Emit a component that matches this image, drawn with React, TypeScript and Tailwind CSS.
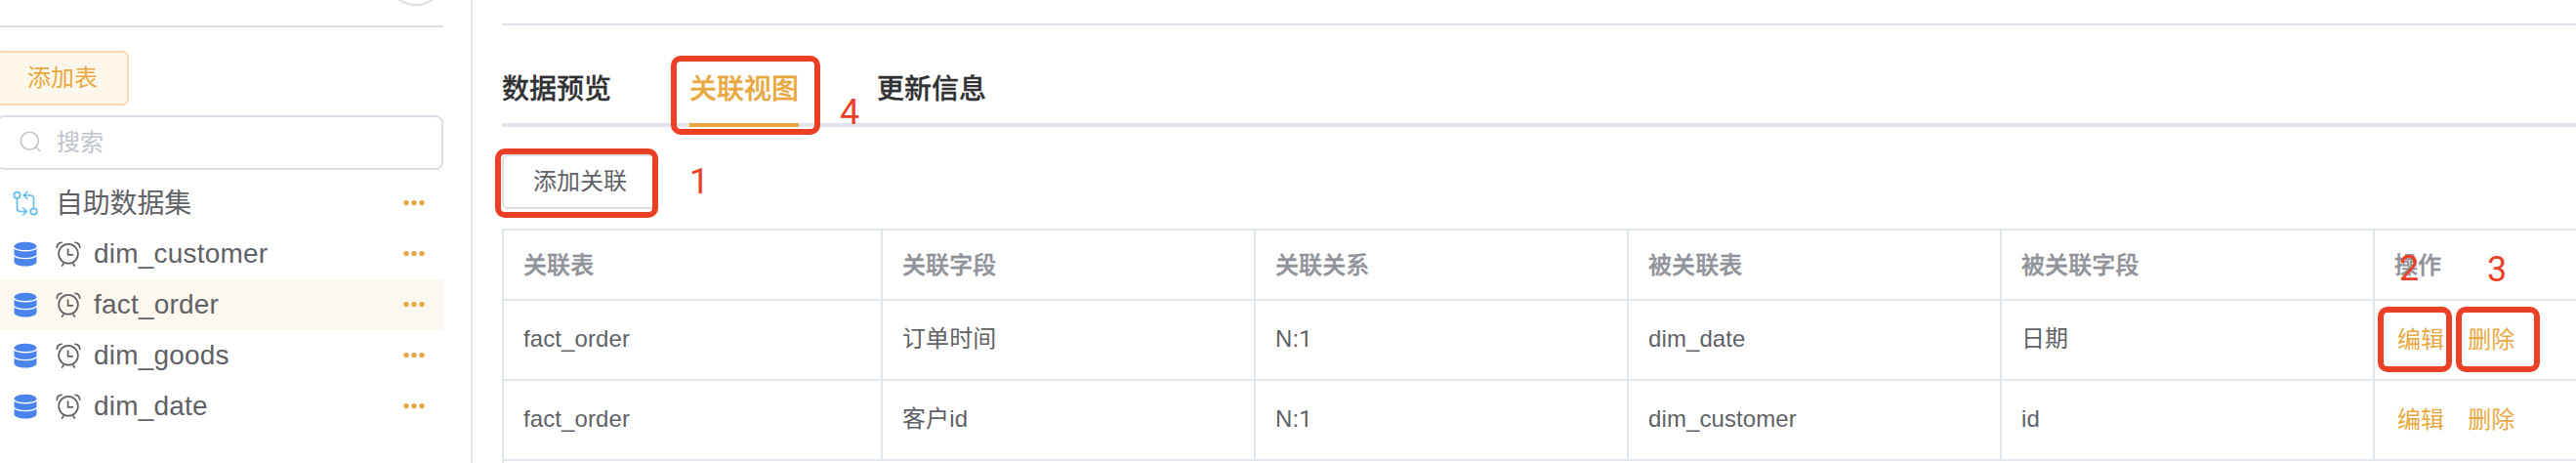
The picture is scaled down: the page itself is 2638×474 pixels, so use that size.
import React from "react";

const tables = ["dim_customer", "fact_order", "dim_goods", "dim_date"];

const relations = [
  { table: "fact_order", field: "订单时间", kind: "N:1", target: "dim_date", targetField: "日期" },
  { table: "fact_order", field: "客户id", kind: "N:1", target: "dim_customer", targetField: "id" },
];

const headers = ["关联表", "关联字段", "关联关系", "被关联表", "被关联字段"];

function Dots() {
  return (
    <svg className="h-6 w-6 shrink-0" viewBox="0 0 24 24" fill="#e8a83f">
      <circle cx="4" cy="11.6" r="2.7" />
      <circle cx="12" cy="11.6" r="2.7" />
      <circle cx="20" cy="11.6" r="2.7" />
    </svg>
  );
}

function DatabaseIcon() {
  return (
    <svg className="h-[26px] w-6 shrink-0" viewBox="0 0 24 26">
      <path d="M0.500 5v16c0 2.600 5 4.500 11.500 4.500s11.500-1.900 11.500-4.500V5z" fill="#4a83ec" />
      <ellipse cx="12" cy="5" rx="11.500" ry="4.300" fill="#4a83ec" />
      <path d="M0 6.200c1.500 2.400 6 3.600 12 3.600s10.500-1.200 12-3.600M0 14.200c1.500 2.400 6 3.400 12 3.400s10.500-1 12-3.400" fill="none" stroke="#fff" strokeWidth="1.400" />
    </svg>
  );
}

function ClockIcon() {
  return (
    <svg className="h-[26px] w-[26px] shrink-0" viewBox="0 0 26 26" fill="none" stroke="#606266" strokeWidth="1.700" strokeLinecap="round">
      <circle cx="13" cy="12.800" r="9.900" />
      <path d="M12.600 8v5.800h4.800M8 23l-1.400 2M18 23l1.400 2M1.300 6.200C1.300 3 3.300 1.500 6 1.300M24.700 6.200C24.700 3 22.700 1.500 20 1.300" />
    </svg>
  );
}

function DatasetIcon() {
  return (
    <svg className="h-[26px] w-[26px] shrink-0" viewBox="0 0 26 26" fill="none" stroke="#62bdf0" strokeWidth="1.700" strokeLinecap="round" strokeLinejoin="round">
      <circle cx="4.500" cy="4.800" r="3.200" />
      <circle cx="21.500" cy="21.500" r="3.200" />
      <path d="M4.500 8v10.500a3 3 0 0 0 3 3H14M10.800 18l3.400 3.500-3.400 3.500M21.500 18.300V8a3 3 0 0 0-3-3H11.500M14.800 1.500L11.300 5l3.500 3.500" />
    </svg>
  );
}

function Mark({ className, children }: { className: string; children?: React.ReactNode }) {
  return <div className={"absolute text-[#ec4026] " + className}>{children}</div>;
}

function Sidebar() {
  return (
    <aside className="relative h-full w-[484px] shrink-0 border-r-2 border-[#e6e6e6]">
      <div className="absolute left-[396px] top-[-54px] h-[60px] w-[60px] rounded-full border-2 border-[#dcdde6]" />
      <div className="flex w-[454px] flex-col">
        <div className="h-7 border-b-2 border-[#dddde5]" />
        <button className="-ml-1 mt-6 h-14 w-[136px] rounded-md border-2 border-[#f5dcab] bg-[#fdf6ea] text-2xl text-[#e8a83f]">
          添加表
        </button>
        <div className="-ml-1 mt-2.5 flex h-14 items-center rounded-lg border-2 border-[#dddde5] pl-[22px] text-2xl text-[#c0c4cc]">
          <svg className="mb-0.5 mr-4 h-[22px] w-[22px]" viewBox="0 0 22 22" fill="none" stroke="#c0c4cc" strokeWidth="1.600">
            <circle cx="10.300" cy="10.300" r="9" />
            <path d="M16.800 16.800l3.700 3.700" strokeLinecap="round" />
          </svg>
          <span>搜索</span>
        </div>
        <div className="mt-2 flex h-[52px] items-center pl-[13px] pr-[18px] text-[28px]">
          <DatasetIcon />
          <span className="ml-[18px] flex-1 pt-0.5 tracking-[-0.2px]">自助数据集</span>
          <Dots />
        </div>
        {tables.map((name) => (
          <div
            key={name}
            className={
              "flex h-[52px] items-center pl-3.5 pr-[18px] text-[28px] tracking-[0.2px] " + (name === "fact_order" ? "bg-[#fdf8ef]" : "")
            }
          >
            <DatabaseIcon />
            <span className="ml-[19px] flex">
              <ClockIcon />
            </span>
            <span className="ml-[13px] flex-1">{name}</span>
            <Dots />
          </div>
        ))}
      </div>
    </aside>
  );
}

export default function App() {
  return (
    <div className="relative flex h-[474px] w-[2638px] overflow-hidden bg-white font-['Liberation_Sans','Noto_Sans_CJK_SC',sans-serif] text-[#606266]">
      <Sidebar />
      <main className="flex min-w-0 flex-1 flex-col pl-[30px]">
        <div className="h-[26px] shrink-0 border-b-2 border-[#dfe3ea]" />
        <nav className="flex h-[104px] shrink-0 gap-20 border-b-4 border-[#dfe4ed] pt-7 text-[28px] font-medium text-[#303133] [-webkit-text-stroke:0.3px_currentColor]">
          <span className="flex h-[76px] items-center pb-px">数据预览</span>
          <span className="flex h-[76px] items-center border-b-4 border-[#e8a83f] pt-[3px] text-[#e8a83f]">关联视图</span>
          <span className="flex h-[76px] items-center pb-px">更新信息</span>
        </nav>
        <button className="mt-7 h-14 w-40 shrink-0 rounded-md border-2 border-[#dcdfe6] text-2xl">添加关联</button>
        <div className="mt-5 flex-1 border-l-2 border-t-2 border-[#dfe6ec] text-2xl tracking-[0.1px]">
          <div className="grid h-[72px] grid-cols-[388px_382px_382px_382px_382px_206px] border-b-2 border-[#dfe6ec] font-medium text-[#909399] [-webkit-text-stroke:0.4px_currentColor]">
            {headers.map((h) => (
              <div key={h} className="flex items-center border-r-2 border-[#dfe6ec] pl-5 pt-0.5">
                {h}
              </div>
            ))}
            <div className="flex items-center pl-5 pt-0.5">操作</div>
          </div>
          {relations.map((r) => (
            <div key={r.target} className="grid h-[82px] grid-cols-[388px_382px_382px_382px_382px_206px] border-b-2 border-[#dfe6ec]">
              <div className="flex items-center border-r-2 border-[#dfe6ec] pb-0.5 pl-5">{r.table}</div>
              <div className="flex items-center border-r-2 border-[#dfe6ec] pb-0.5 pl-5">{r.field}</div>
              <div className="flex items-center border-r-2 border-[#dfe6ec] pb-0.5 pl-5">
                N:<span className="font-['Roboto']">1</span>
              </div>
              <div className="flex items-center border-r-2 border-[#dfe6ec] pb-0.5 pl-5">{r.target}</div>
              <div className="flex items-center border-r-2 border-[#dfe6ec] pb-0.5 pl-5">{r.targetField}</div>
              <div className="flex items-center gap-6 pl-[23px] text-[#e8a83f]">
                <span>编辑</span>
                <span>删除</span>
              </div>
            </div>
          ))}
        </div>
      </main>

      <Mark className="left-[687px] top-[57px] h-[81px] w-[153px] rounded-[10px] border-[6px] border-[#ec4026]" />
      <Mark className="left-[507px] top-[152px] h-[71px] w-[167px] rounded-[10px] border-[6px] border-[#ec4026]" />
      <Mark className="left-[2435px] top-[314px] h-[67px] w-[76px] rounded-[10px] border-[6px] border-[#ec4026]" />
      <Mark className="left-[2515px] top-[314px] h-[67px] w-[86px] rounded-[10px] border-[6px] border-[#ec4026]" />
      <Mark className="left-[860px] top-[95px] font-['Roboto'] text-4xl">4</Mark>
      <Mark className="left-[706px] top-[166px] font-['Roboto'] text-4xl">1</Mark>
      <Mark className="left-[2457px] top-[255px] font-['Roboto'] text-4xl">2</Mark>
      <Mark className="left-[2547px] top-[256px] font-['Roboto'] text-4xl">3</Mark>
    </div>
  );
}
